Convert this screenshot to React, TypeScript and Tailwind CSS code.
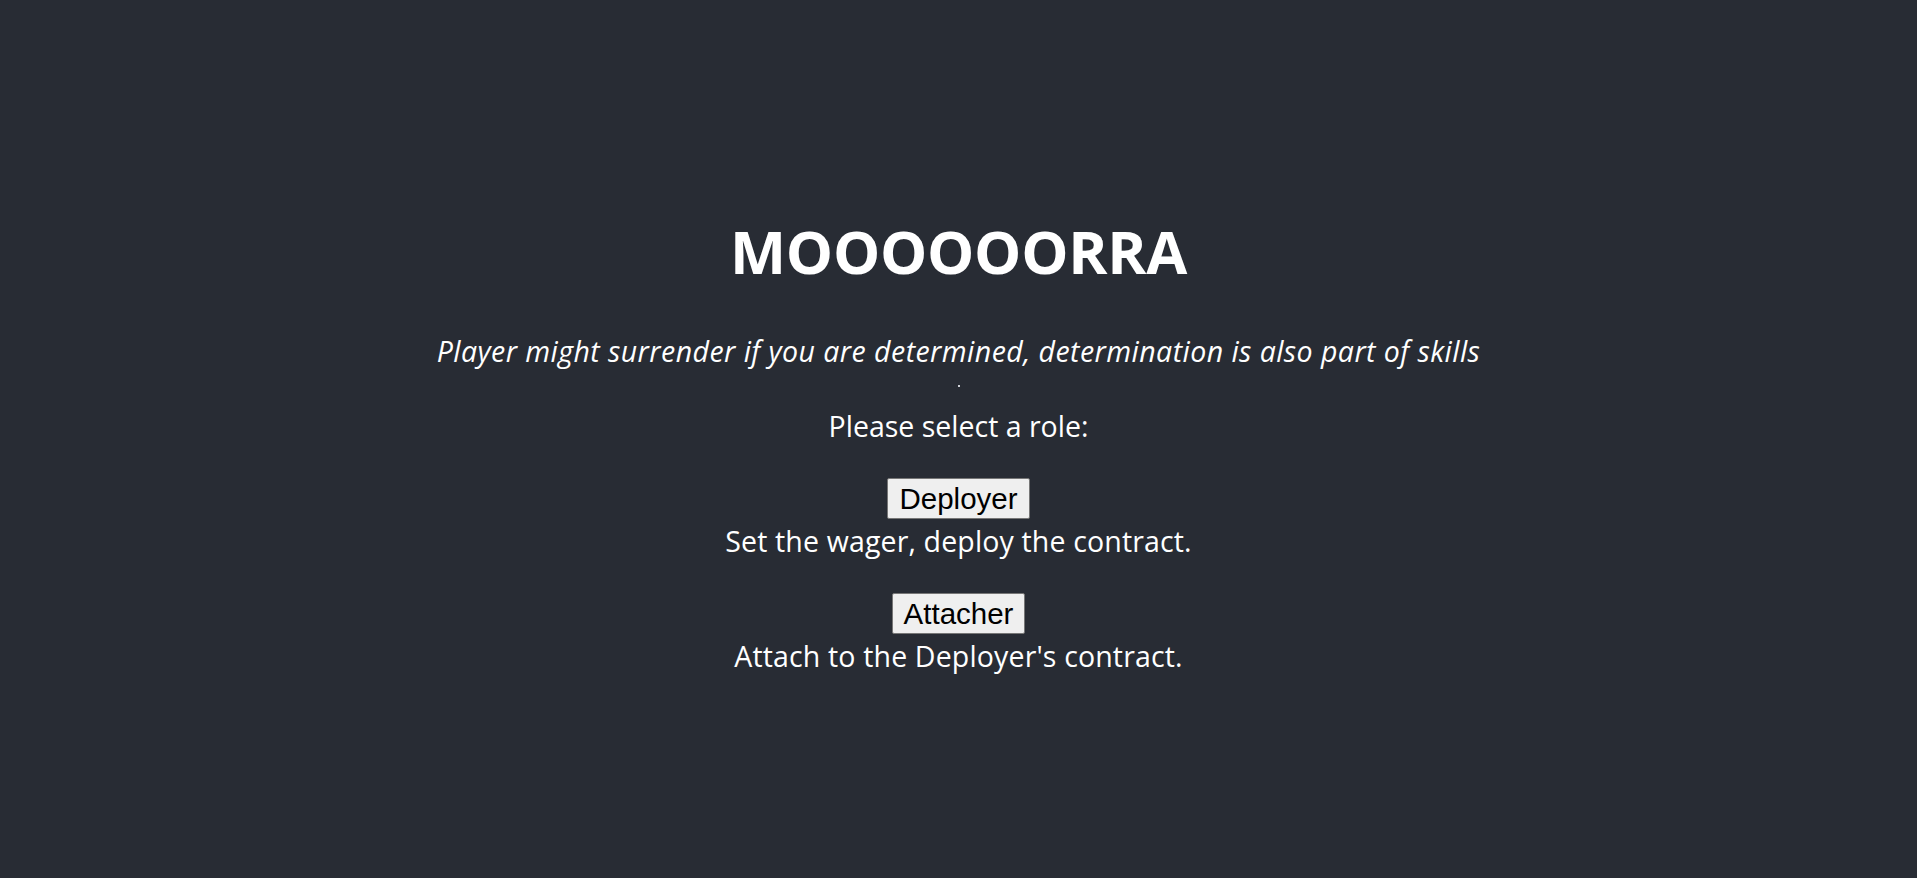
import React from "react";

const body = { fontFamily: '"Open Sans", "Noto Sans", sans-serif' };

export default function App() {
  return (
    <div
      className="min-h-screen w-full bg-[#282c34] text-white flex flex-col items-center text-center"
      style={body}
    >
      <h1 className="mt-[215px] text-[59.5px] leading-[72px] font-bold tracking-[-0.3px]">
        MOOOOOORRA
      </h1>
      <p className="mt-[44px] text-[28.5px] leading-[40px] italic tracking-[0.45px]">
        Player might surrender if you are determined, determination is also part of skills
      </p>
      <div className="mt-[14px] w-[2px] h-[2px] bg-[#cfd2d8]" />
      <p className="mt-[19px] text-[28.5px] leading-[40px] tracking-[0px]">
        Please select a role:
      </p>
      <div className="mt-[32px] flex flex-col items-center">
        <button
          className="bg-[#efefef] text-black border border-[#767676] rounded-[2px] px-[11px] py-[3px] text-[29.5px] leading-[33px]"
          style={{ fontFamily: '"Liberation Sans", Arial, sans-serif' }}
        >
          Deployer
        </button>
        <p className="mt-[2px] text-[28.5px] leading-[40px] tracking-[0.15px]">
          Set the wager, deploy the contract.
        </p>
      </div>
      <div className="mt-[32px] flex flex-col items-center">
        <button
          className="bg-[#efefef] text-black border border-[#767676] rounded-[2px] px-[11px] py-[3px] text-[29.5px] leading-[33px]"
          style={{ fontFamily: '"Liberation Sans", Arial, sans-serif' }}
        >
          Attacher
        </button>
        <p className="mt-[2px] text-[28.5px] leading-[40px] tracking-[0.15px]">
          Attach to the Deployer's contract.
        </p>
      </div>
    </div>
  );
}
